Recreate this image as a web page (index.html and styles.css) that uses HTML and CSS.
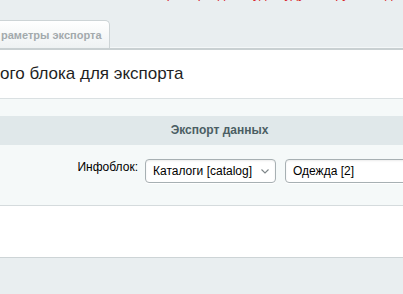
FILE: index.html
```html
<!DOCTYPE html>
<html lang="ru">
<head>
    <meta charset="UTF-8">
    <meta name="viewport" content="width=device-width, initial-scale=1.0">
    <title>Экспорт данных</title>
    <link rel="stylesheet" href="styles.css">
</head>
<body>
    <div class="top">
        <p class="notice">Внимание! Выберите раздел, куда будут выгружены данные</p>
    </div>
    <div class="tabs">
        <div class="tab">раметры экспорта</div>
    </div>
    <div class="panel">
        <div class="title">ого блока для экспорта</div>
        <div class="content">
            <div class="heading">Экспорт данных</div>
            <div class="row">
                <label class="row-label" for="iblock">Инфоблок:</label>
                <div class="row-field">
                    <div class="select-wrap">
                        <select id="iblock" class="select">
                            <option>Каталоги [catalog]</option>
                        </select>
                        <svg class="chevron" width="8" height="5" viewBox="0 0 8 5">
                            <path d="M0.5 0.5 L4 4 L7.5 0.5" fill="none" stroke="#7d8588" stroke-width="1.1"/>
                        </svg>
                    </div>
                    <div class="select-wrap wide">
                        <select class="select">
                            <option>Одежда [2]</option>
                        </select>
                    </div>
                </div>
            </div>
        </div>
        <div class="buttons"></div>
    </div>
</body>
</html>
```

FILE: styles.css
```css
body {
    margin: 0;
    width: 403px;
    height: 294px;
    overflow: hidden;
    background-color: #e9eef0;
    font-family: "Liberation Sans", Arial, sans-serif;
}
.top {
    height: 20px;
    overflow: hidden;
}
.notice {
    margin: -14px 0 0 66px;
    font-size: 13px;
    line-height: 15px;
    color: #d9262e;
    white-space: nowrap;
}
.tabs {
    height: 28px;
    display: flex;
}
.tab {
    width: 114px;
    margin-left: -4px;
    padding: 8px 0 0 4px;
    box-sizing: border-box;
    border: 1px solid #cdd4d6;
    border-bottom: none;
    border-radius: 0 5px 0 0;
    background: linear-gradient(#ffffff, #eef2f3);
    font-size: 11px;
    font-weight: bold;
    color: #a3aaad;
    white-space: nowrap;
}
.panel {
    border-top: 2px solid #c9d0d2;
    box-shadow: 0 -1px 0 #f4f7f8;
}
.title {
    height: 48px;
    line-height: 48px;
    background-color: #ffffff;
    border-bottom: 1px solid #dae0e2;
    font-size: 17px;
    color: #1f1f1f;
    white-space: nowrap;
}
.content {
    background-color: #f5f9f9;
    padding-top: 17px;
    box-sizing: border-box;
    height: 106px;
}
.heading {
    width: 439px;
    height: 29px;
    line-height: 29px;
    background-color: #e0e8ea;
    text-align: center;
    font-size: 12px;
    font-weight: bold;
    color: #4b5e63;
    white-space: nowrap;
}
.row {
    display: flex;
    padding-top: 14px;
}
.row-label {
    flex-shrink: 0;
    width: 138px;
    padding-right: 7px;
    text-align: right;
    font-size: 12px;
    color: #000;
    line-height: 18px;
    margin-top: -1px;
}
.row-field {
    display: flex;
    gap: 9px;
}
.select-wrap {
    position: relative;
    flex-shrink: 0;
    width: 131px;
}
.select-wrap.wide {
    width: 160px;
}
.select {
    -webkit-appearance: none;
    appearance: none;
    width: 100%;
    height: 24px;
    margin: 0;
    padding: 0 0 0 7px;
    box-sizing: border-box;
    border: 1px solid #a7b0b3;
    border-radius: 4px;
    background-color: #ffffff;
    box-shadow: 0 1px 0 #ffffff, inset 0 1px 2px rgba(0, 0, 0, 0.08);
    font-family: "Liberation Sans", Arial, sans-serif;
    font-size: 12px;
    color: #000;
}
.chevron {
    position: absolute;
    right: 7px;
    top: 10px;
}
.buttons {
    height: 51px;
    background-color: #ffffff;
    border-top: 1px solid #d5dbdd;
    border-bottom: 1px solid #cdd4d6;
}
```
